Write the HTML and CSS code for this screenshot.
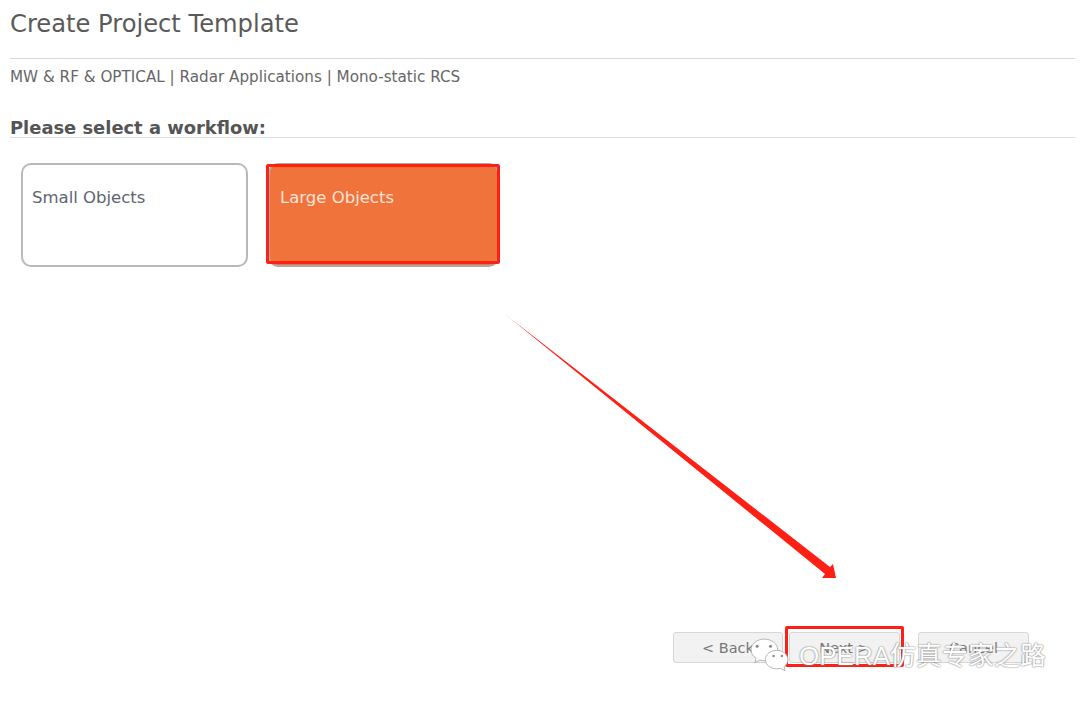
FILE: index.html
```html
<!DOCTYPE html>
<html lang="en">
<head>
<meta charset="utf-8">
<title>Create Project Template</title>
<link rel="stylesheet" href="styles.css">
</head>
<body>
<main class="page">
  <h1 class="title">Create Project Template</h1>
  <p class="crumbs">MW &amp; RF &amp; OPTICAL | Radar Applications | Mono-static RCS</p>
  <h2 class="section">Please select a workflow:</h2>
  <div class="options">
    <div class="option">Small Objects</div>
    <div class="option selected">Large Objects</div>
  </div>
  <div class="actions">
    <button class="btn back">&lt; Back</button>
    <button class="btn next">Next &gt;</button>
    <button class="btn cancel">Cancel</button>
  </div>
</main>
<div class="mark mark-option"></div>
<div class="mark mark-next"></div>
<svg class="arrow" width="1080" height="704" viewBox="0 0 1080 704" aria-hidden="true">
  <polygon points="506,315 830,567 833,564 836,578 822,578 825,574" fill="#ff2015"/>
</svg>
<div class="watermark">
  <svg class="wechat" width="39" height="37" viewBox="0 0 38 34" aria-hidden="true">
    <path d="M14 1C6.800 1 1 5.700 1 11.500c0 3.400 2 6.300 5 8.200L4.800 24l4.900-2.600c1.400.4 2.800.6 4.300.6 7.200 0 13-4.700 13-10.500S21.200 1 14 1z" fill="#fff" stroke="#9a9a9a" stroke-width=".7"/>
    <path d="M26 12c-6.100 0-11 4-11 9s4.900 9 11 9c1.300 0 2.500-.2 3.600-.5l4.600 2.400-1.100-3.900c2.400-1.700 3.900-4.200 3.900-7 0-5-4.900-9-11-9z" fill="#fff" stroke="#9a9a9a" stroke-width=".7"/>
    <circle cx="7" cy="8" r="1.500" fill="#8a8a8a"/>
    <circle cx="20" cy="8" r="1.500" fill="#8a8a8a"/>
    <circle cx="23" cy="17.500" r="1.200" fill="#8a8a8a"/>
    <circle cx="31" cy="17.500" r="1.200" fill="#8a8a8a"/>
  </svg>
  <span class="wm-text">OPERA仿真专家之路</span>
</div>
</body>
</html>
```
FILE: styles.css
```css
* { box-sizing: border-box; }
html, body { margin: 0; height: 100%; background: #fff; overflow: hidden; }
body { font-family: "DejaVu Sans", Verdana, sans-serif; color: #555; }
.page { padding: 10px 5px 0 10px; height: 704px; display: flex; flex-direction: column; }
.title {
  margin: 0;
  height: 49px;
  font-size: 24.200px;
  line-height: 28px;
  font-weight: 400;
  color: #5a5a5a;
  border-bottom: 1px solid #d9d9d9;
}
.crumbs { margin: 9px 0 0; font-size: 15.200px; line-height: 18px; color: #666; }
.section {
  margin: 31px 0 0;
  font-size: 17.900px;
  line-height: 21px;
  height: 21px;
  font-weight: 700;
  color: #555;
  border-bottom: 1px solid #dcdcdc;
}
.options { display: flex; gap: 20px; margin: 25px 0 0 11px; }
.option {
  width: 227px;
  height: 104px;
  padding: 23px 9px;
  font-size: 16.500px;
  line-height: 20px;
  color: #5d6570;
  background: #fff;
  border: 2px solid #b9b9b9;
  border-radius: 10px;
}
.option.selected { width: 231px; padding-left: 10px; color: #fde3d6; background: #f1733c; border-color: #aaa; }
.actions { display: flex; margin: 365px 0 0 663px; }
.btn {
  height: 31px;
  padding: 0;
  font: 14.500px "DejaVu Sans", Verdana, sans-serif;
  color: #777;
  background: #f2f2f2;
  border: 1px solid #d6d6d6;
  border-radius: 3px;
}
.back { width: 110px; margin-right: 6px; }
.next { width: 111px; margin-right: 18px; }
.cancel { width: 111px; }
.mark { position: absolute; border: 3px solid #ff2015; border-radius: 2px; }
.mark-option { left: 266px; top: 164px; width: 234px; height: 100px; }
.mark-next { left: 785px; top: 626px; width: 119px; height: 41px; }
.arrow { position: absolute; left: 0; top: 0; }
.watermark { position: absolute; left: 750px; top: 637px; display: flex; align-items: center; gap: 10px; }
.wm-text {
  font-family: "Liberation Sans", "Noto Sans CJK SC", sans-serif;
  font-size: 26px;
  line-height: 36px;
  color: #fff;
  text-shadow: 0 0 2px #888, 0 0 1px #888;
}
```
